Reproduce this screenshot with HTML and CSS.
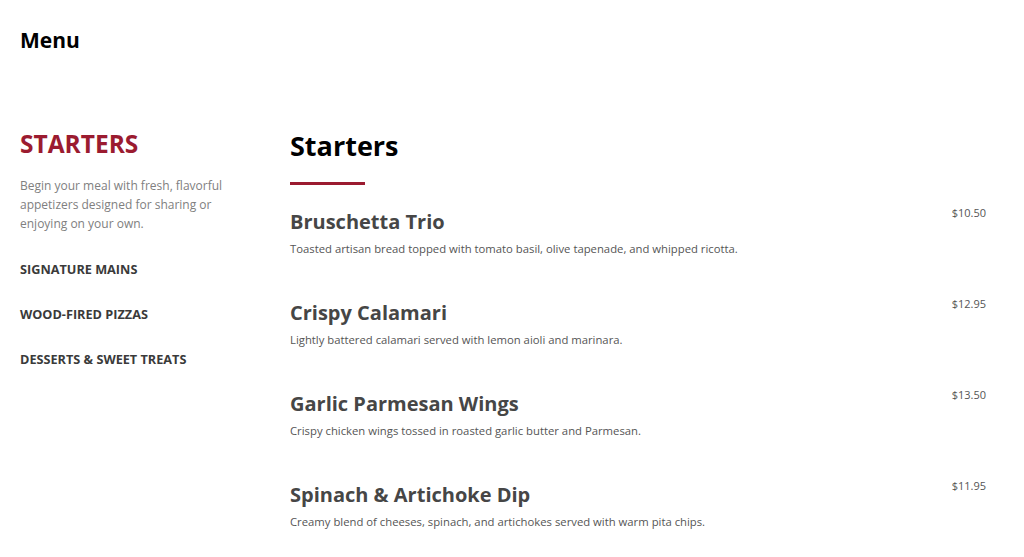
FILE: index.html
```html
<!DOCTYPE html>
<html lang="en">
<head>
<meta charset="utf-8">
<title>Menu</title>
<link rel="stylesheet" href="styles.css">
</head>
<body>
<header class="top">
  <h1 class="page-title">Menu</h1>
</header>
<div class="layout">
  <aside class="sidebar">
    <h2 class="side-active">STARTERS</h2>
    <p class="side-desc">Begin your meal with fresh, flavorful appetizers designed for sharing or enjoying on your own.</p>
    <nav class="side-nav">
      <a class="side-link" href="#">SIGNATURE MAINS</a>
      <a class="side-link" href="#">WOOD-FIRED PIZZAS</a>
      <a class="side-link" href="#">DESSERTS &amp; SWEET TREATS</a>
    </nav>
  </aside>
  <main class="content">
    <h2 class="section-title">Starters</h2>
    <div class="rule"></div>
    <div class="items">
      <div class="item">
        <div class="item-text">
          <h3 class="item-name">Bruschetta Trio</h3>
          <p class="item-desc">Toasted artisan bread topped with tomato basil, olive tapenade, and whipped ricotta.</p>
        </div>
        <span class="price">$10.50</span>
      </div>
      <div class="item">
        <div class="item-text">
          <h3 class="item-name">Crispy Calamari</h3>
          <p class="item-desc">Lightly battered calamari served with lemon aioli and marinara.</p>
        </div>
        <span class="price">$12.95</span>
      </div>
      <div class="item">
        <div class="item-text">
          <h3 class="item-name">Garlic Parmesan Wings</h3>
          <p class="item-desc">Crispy chicken wings tossed in roasted garlic butter and Parmesan.</p>
        </div>
        <span class="price">$13.50</span>
      </div>
      <div class="item">
        <div class="item-text">
          <h3 class="item-name">Spinach &amp; Artichoke Dip</h3>
          <p class="item-desc">Creamy blend of cheeses, spinach, and artichokes served with warm pita chips.</p>
        </div>
        <span class="price">$11.95</span>
      </div>
    </div>
  </main>
</div>
</body>
</html>
```
FILE: styles.css
```css
* { box-sizing: border-box; }
html, body { margin: 0; padding: 0; background: #fff; }
body {
  font-family: "Open Sans", "Noto Sans", sans-serif;
  color: #333;
  overflow: hidden;
  height: 557px;
}
.top { padding: 27px 20px 0; }
.page-title {
  margin: 0;
  font-size: 21px;
  font-weight: 700;
  color: #000;
  line-height: 26px;
}
.layout {
  display: grid;
  grid-template-columns: 270px 1fr;
  padding: 0 38px 0 20px;
  margin-top: 75px;
}
.side-active {
  margin: 0;
  color: #9b1b30;
  font-size: 24.5px;
  line-height: 32px;
  font-weight: 700;
}
.side-desc {
  margin: 16px 0 0;
  color: #808080;
  font-size: 12px;
  line-height: 19px;
  width: 215px;
}
.side-nav {
  display: flex;
  flex-direction: column;
  gap: 28px;
  margin-top: 28px;
}
.side-link {
  font-size: 12.7px;
  font-weight: 700;
  color: #3a3a3a;
  text-decoration: none;
  line-height: 17px;
}
.section-title {
  margin: 0;
  font-size: 27px;
  line-height: 36px;
  font-weight: 700;
  color: #000;
}
.rule {
  width: 75px;
  height: 3px;
  background: #9b1b30;
  margin-top: 18px;
}
.items {
  display: flex;
  flex-direction: column;
  gap: 41px;
  margin-top: 22px;
}
.item {
  display: flex;
  justify-content: space-between;
  align-items: flex-start;
}
.item-name {
  margin: 0;
  font-size: 20px;
  line-height: 30px;
  font-weight: 700;
  color: #464646;
}
.item-desc {
  margin: 3px 0 0;
  font-size: 11.3px;
  line-height: 17px;
  color: #555;
}
.price {
  font-size: 11px;
  line-height: 12px;
  color: #555;
}
```
